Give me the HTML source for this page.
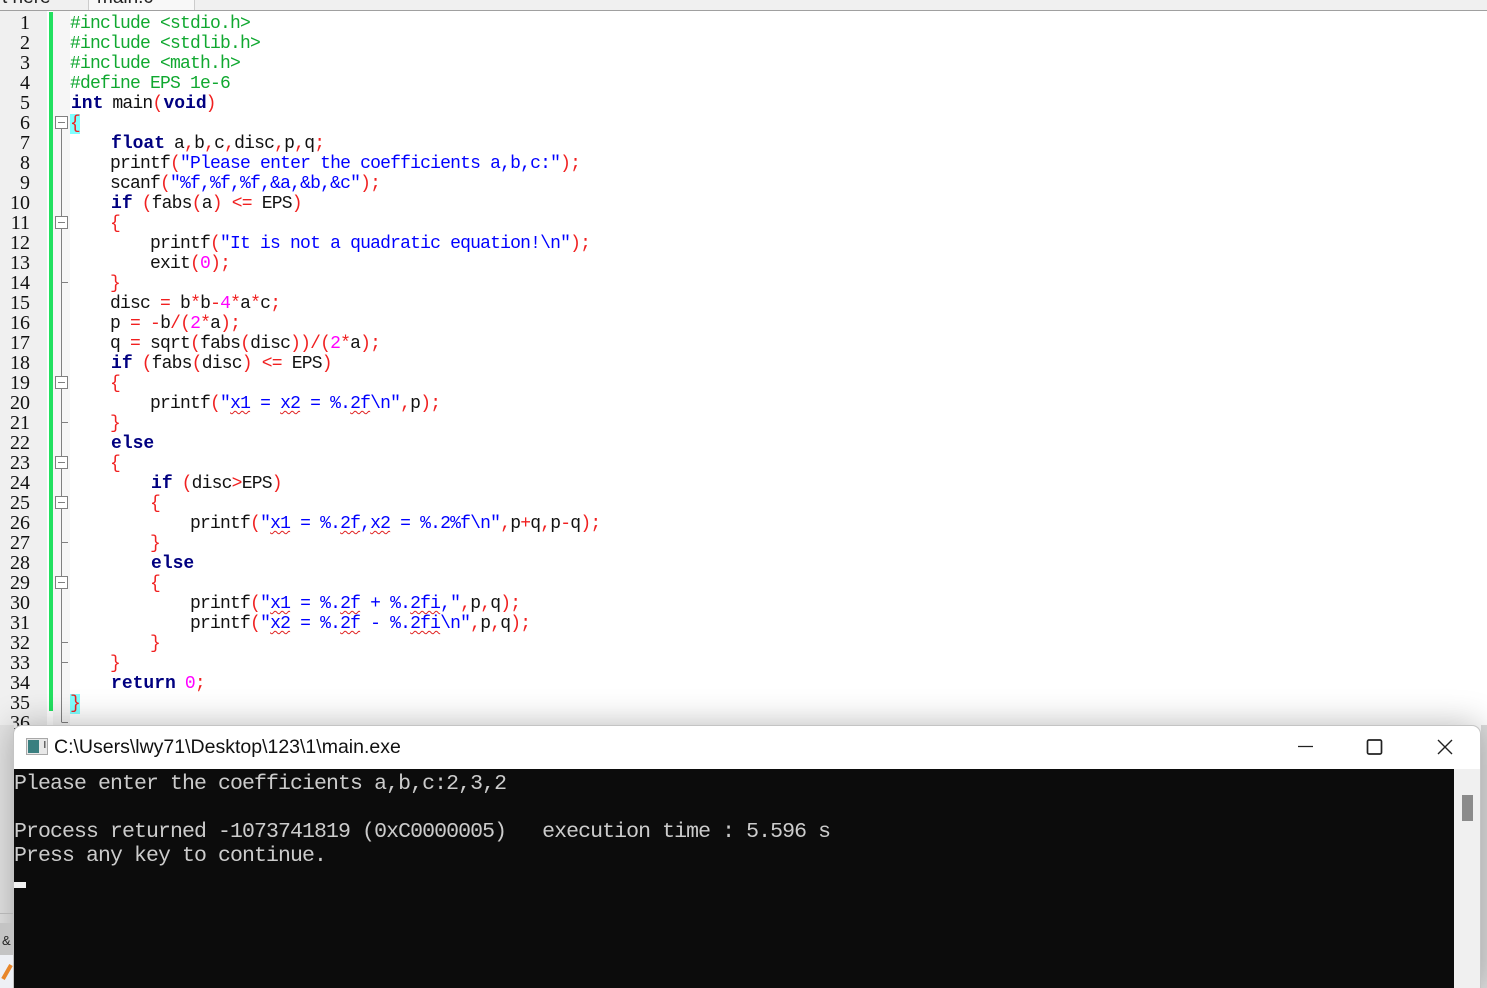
<!DOCTYPE html>
<html><head><meta charset="utf-8"><title>main.c</title>
<style>
html,body{margin:0;padding:0;width:1487px;height:988px;overflow:hidden;background:#fff}
#root{position:relative;width:1487px;height:988px;overflow:hidden;background:#fff}
#tabs{position:absolute;left:0;top:0;width:1487px;height:10px;background:#f0f0f0;border-bottom:1px solid #a0a0a0;overflow:hidden;font:19px "Liberation Sans",sans-serif;color:#222}
#tabs .tab{position:absolute;left:88px;top:0;width:105px;height:10px;background:#f8f8f8;border-left:1px solid #ccc;border-right:1px solid #ccc}
#tabs span{position:absolute;top:-13px;white-space:pre}
#gutter{position:absolute;left:0;top:11px;width:47px;height:720px;background:#f0f0f0}
#nums{position:absolute;left:0;top:13px;width:30px;text-align:right;font:20px/20px "Liberation Serif",serif;color:#111;white-space:pre}
#green{position:absolute;left:49px;top:12px;width:4px;height:699px;background:#22e060}
#fold{position:absolute;left:53px;top:11px;width:17px;height:720px;background:#f6f6f6}
#code{position:absolute;left:70px;top:14px;margin:0;font:18px/20px "Liberation Mono",monospace;letter-spacing:-.8px;color:#111}
#code div{height:20px;white-space:pre}
.k{font:bold 18px/0 "Liberation Mono",monospace;letter-spacing:0;color:#000080;position:relative;left:1px}
.s{color:#0000ff}.r{color:#f02020}.n{color:#ff00ff}.g{color:#10a830}
.u{text-decoration:underline wavy #e02020 1px;text-underline-offset:2px}
.b{background:#80ffff}
#left{position:absolute;left:0;top:725px;width:14px;height:263px;background:#e4e4e4}
#right{position:absolute;left:1481px;top:725px;width:6px;height:263px;background:#dcdcdc}
#win{position:absolute;left:13px;top:725px;width:1468px;height:263px;background:#fff;border:1px solid #c4c4c4;border-bottom:0;border-radius:9px 9px 0 0;box-shadow:0 0 34px rgba(0,0,0,.28);overflow:hidden;box-sizing:border-box}
#title{position:absolute;left:40px;top:9px;font:19.5px/24px "Liberation Sans",sans-serif;color:#111;white-space:pre}
#con{position:absolute;left:0;top:43px;width:1440px;height:230px;background:#0c0c0c}
#con pre{position:absolute;left:0;top:3px;margin:0;font:21.5px/24px "Liberation Mono",monospace;letter-spacing:-.9px;color:#cccccc}
#cursor{position:absolute;left:0;top:113px;width:12px;height:6px;background:#f2f2f2}
#sb{position:absolute;left:1440px;top:43px;width:27px;height:230px;background:#f0f0f0}
#thumb{position:absolute;left:8px;top:26px;width:11px;height:26px;background:#8b8b8b}
svg{position:absolute;left:0;top:0}
</style></head><body><div id="root">
<div id="tabs"><span style="left:2px">t here</span><div class="tab"></div><span style="left:97px">main.c</span></div>
<div id="gutter"></div>
<div id="fold"></div>
<div id="green"></div>
<div id="nums">1
2
3
4
5
6
7
8
9
10
11
12
13
14
15
16
17
18
19
20
21
22
23
24
25
26
27
28
29
30
31
32
33
34
35
36</div>
<svg width="1487" height="988" style="pointer-events:none">
<g stroke="#808080" fill="none" stroke-width="1">
<path d="M61.5 128V722M61.5 282.5H68M61.5 422.5H68M61.5 542.5H68M61.5 642.5H68M61.5 662.5H68M61.5 722.5H68"/>
</g>
<g stroke="#808080" fill="#fff" stroke-width="1">
<rect x="55.5" y="116.5" width="12" height="12"/>
<rect x="55.5" y="216.5" width="12" height="12"/>
<rect x="55.5" y="376.5" width="12" height="12"/>
<rect x="55.5" y="456.5" width="12" height="12"/>
<rect x="55.5" y="496.5" width="12" height="12"/>
<rect x="55.5" y="576.5" width="12" height="12"/>
<path d="M58 122.5H65M58 222.5H65M58 382.5H65M58 462.5H65M58 502.5H65M58 582.5H65" fill="none"/>
</g>
</svg>
<div id="code">
<div><span class="g">#include &lt;stdio.h&gt;</span></div>
<div><span class="g">#include &lt;stdlib.h&gt;</span></div>
<div><span class="g">#include &lt;math.h&gt;</span></div>
<div><span class="g">#define EPS 1e-6</span></div>
<div><span class="k">int</span> main<span class="r">(</span><span class="k">void</span><span class="r">)</span></div>
<div><span class="r b">{</span></div>
<div>    <span class="k">float</span> a<span class="r">,</span>b<span class="r">,</span>c<span class="r">,</span>disc<span class="r">,</span>p<span class="r">,</span>q<span class="r">;</span></div>
<div>    printf<span class="r">(</span><span class="s">"Please enter the coefficients a,b,c:"</span><span class="r">);</span></div>
<div>    scanf<span class="r">(</span><span class="s">"%f,%f,%f,&amp;a,&amp;b,&amp;c"</span><span class="r">);</span></div>
<div>    <span class="k">if</span> <span class="r">(</span>fabs<span class="r">(</span>a<span class="r">)</span> <span class="r">&lt;=</span> EPS<span class="r">)</span></div>
<div>    <span class="r">{</span></div>
<div>        printf<span class="r">(</span><span class="s">"It is not a quadratic equation!\n"</span><span class="r">);</span></div>
<div>        exit<span class="r">(</span><span class="n">0</span><span class="r">);</span></div>
<div>    <span class="r">}</span></div>
<div>    disc <span class="r">=</span> b<span class="r">*</span>b<span class="r">-</span><span class="n">4</span><span class="r">*</span>a<span class="r">*</span>c<span class="r">;</span></div>
<div>    p <span class="r">=</span> <span class="r">-</span>b<span class="r">/(</span><span class="n">2</span><span class="r">*</span>a<span class="r">);</span></div>
<div>    q <span class="r">=</span> sqrt<span class="r">(</span>fabs<span class="r">(</span>disc<span class="r">))/(</span><span class="n">2</span><span class="r">*</span>a<span class="r">);</span></div>
<div>    <span class="k">if</span> <span class="r">(</span>fabs<span class="r">(</span>disc<span class="r">)</span> <span class="r">&lt;=</span> EPS<span class="r">)</span></div>
<div>    <span class="r">{</span></div>
<div>        printf<span class="r">(</span><span class="s">"<span class="u">x1</span> = <span class="u">x2</span> = %.<span class="u">2f</span>\n"</span><span class="r">,</span>p<span class="r">);</span></div>
<div>    <span class="r">}</span></div>
<div>    <span class="k">else</span></div>
<div>    <span class="r">{</span></div>
<div>        <span class="k">if</span> <span class="r">(</span>disc<span class="r">&gt;</span>EPS<span class="r">)</span></div>
<div>        <span class="r">{</span></div>
<div>            printf<span class="r">(</span><span class="s">"<span class="u">x1</span> = %.<span class="u">2f</span>,<span class="u">x2</span> = %.2%f\n"</span><span class="r">,</span>p<span class="r">+</span>q<span class="r">,</span>p<span class="r">-</span>q<span class="r">);</span></div>
<div>        <span class="r">}</span></div>
<div>        <span class="k">else</span></div>
<div>        <span class="r">{</span></div>
<div>            printf<span class="r">(</span><span class="s">"<span class="u">x1</span> = %.<span class="u">2f</span> + %.<span class="u">2fi</span>,"</span><span class="r">,</span>p<span class="r">,</span>q<span class="r">);</span></div>
<div>            printf<span class="r">(</span><span class="s">"<span class="u">x2</span> = %.<span class="u">2f</span> - %.<span class="u">2fi</span>\n"</span><span class="r">,</span>p<span class="r">,</span>q<span class="r">);</span></div>
<div>        <span class="r">}</span></div>
<div>    <span class="r">}</span></div>
<div>    <span class="k">return</span> <span class="n">0</span><span class="r">;</span></div>
<div><span class="r b">}</span></div>
</div>
<div id="left"></div>
<div id="right"></div>
<div id="win">
<svg width="30" height="30" style="left:11px;top:11px">
<rect x="1.5" y="1.5" width="21" height="16" fill="#e8e8e8" stroke="#a8a8a8"/>
<rect x="3" y="3" width="11" height="13" fill="#3a7f80"/>
<rect x="19" y="4" width="1.500" height="7" fill="#666"/>
</svg>
<div id="title">C:\Users\lwy71\Desktop\123\1\main.exe</div>
<svg width="1466" height="43" style="left:0;top:0">
<path d="M1284 20.500H1299" stroke="#222" stroke-width="1.200" fill="none"/>
<rect x="1353.500" y="14" width="14" height="14" rx="1.500" stroke="#222" stroke-width="1.700" fill="none"/>
<path d="M1424 14L1438 28M1438 14L1424 28" stroke="#222" stroke-width="1.400" fill="none"/>
</svg>
<div id="con"><pre>Please enter the coefficients a,b,c:2,3,2

Process returned -1073741819 (0xC0000005)   execution time : 5.596 s
Press any key to continue.</pre><div id="cursor"></div></div>
<div id="sb"><div id="thumb"></div></div>
</div>
<div style="position:absolute;left:0;top:913px;width:13px;height:1px;background:#b5b5b5"></div>
<div style="position:absolute;left:0;top:923px;width:13px;height:32px;background:#c4c4c4;font:13px/36px 'Liberation Sans',sans-serif;color:#222;padding-left:2px;box-sizing:border-box">&amp;</div>
<div style="position:absolute;left:0;top:955px;width:13px;height:33px;background:#eef0f5"></div>
<svg width="14" height="30" style="left:0;top:958px"><path d="M11 7L3 21" stroke="#e8862a" stroke-width="4"/></svg>
</div></body></html>
